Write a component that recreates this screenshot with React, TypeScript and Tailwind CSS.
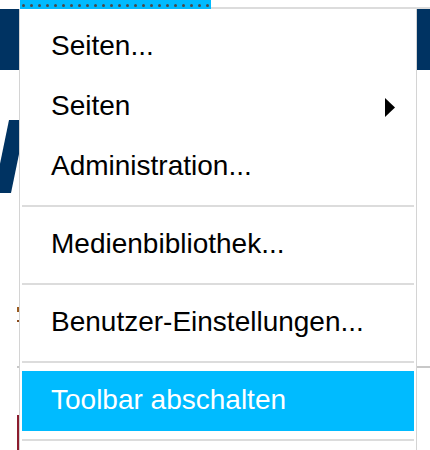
const items: { label: string; submenu?: boolean; active?: boolean; sepBefore?: boolean }[] = [
  { label: "Seiten..." },
  { label: "Seiten", submenu: true },
  { label: "Administration..." },
  { label: "Medienbibliothek...", sepBefore: true },
  { label: "Benutzer-Einstellungen...", sepBefore: true },
  { label: "Toolbar abschalten", sepBefore: true, active: true },
];

function Separator() {
  return <div className="my-2 h-[2px] bg-[#dcdcdc]" />;
}

function MenuItem({ label, submenu, active }: { label: string; submenu?: boolean; active?: boolean }) {
  return (
    <div
      className={`flex h-[60px] items-center justify-between pl-[29px] pr-[19px] text-[28px] leading-[57px] ${
        active ? "bg-[#00bbff] text-white" : "text-black"
      }`}
    >
      <span className="self-start">{label}</span>
      {submenu && (
        <svg width="10" height="19" viewBox="0 0 10 19" className="shrink-0">
          <polygon points="0,0 10,9.5 0,19" fill="#000" />
        </svg>
      )}
    </div>
  );
}

export default function App() {
  return (
    <div className="relative h-[450px] w-[430px] overflow-hidden bg-white font-['Liberation_Sans',Arial,sans-serif]">
      {/* Toolbar */}
      <div className="flex h-[9px]">
        <div className="w-[20px]" />
        <div className="flex w-[191px] items-start gap-[5px] bg-[#00bbff] pl-[2px] pt-[3.5px]">
          {Array.from({ length: 24 }).map((_, i) => (
            <span key={i} className="h-[3px] w-[3px] shrink-0 rounded-full bg-[#4a4a4a]" />
          ))}
        </div>
        <div className="flex-1 border-b-2 border-[#dcdcdc]" />
      </div>

      {/* Header band */}
      <div className="h-[61px] bg-[#003362]" />

      {/* Page content behind the menu */}
      <div className="flex flex-col">
        <svg width="20" height="73" viewBox="0 0 20 73" className="mt-[50px]">
          <polygon points="9,0 26,0 11,73 -6,73" fill="#003362" />
        </svg>
        <div className="ml-[17px] mt-[114px] h-[5px] w-[2px] bg-[#9a5a1e]" />
        <div className="ml-[17px] mt-[8px] h-[2px] w-[2px] bg-[#8a4a1a]" />
        <div className="ml-[17px] mt-[44px] h-[2px] bg-[#c8c8c8]" />
        <div className="ml-[17px] mt-[47px] h-[35px] w-[3px] bg-[#8b1c2e]" />
      </div>

      {/* Dropdown menu */}
      <div className="absolute left-[19px] top-[9px] w-[398px] border-x border-[#d4d4d4] bg-white px-[2px] pt-[8px] pb-[60px]">
        {items.map((it) => (
          <div key={it.label}>
            {it.sepBefore && <Separator />}
            <MenuItem label={it.label} submenu={it.submenu} active={it.active} />
          </div>
        ))}
        <Separator />
      </div>
    </div>
  );
}
